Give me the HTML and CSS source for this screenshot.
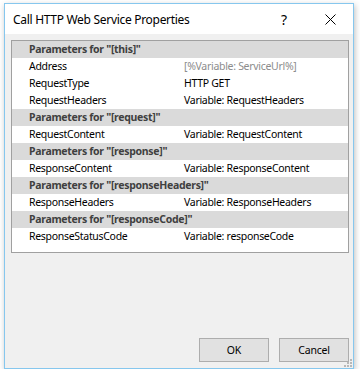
FILE: index.html
```html
<!DOCTYPE html>
<html>
<head>
    <title>Call HTTP Web Service Properties</title>
    <link rel="stylesheet" href="styles.css">
</head>
<body>
    <div class="dialog">
        <div class="title-bar">
            <span class="title">Call HTTP Web Service Properties</span>
            <span class="title-btn help">?</span>
            <span class="title-btn close">
                <svg width="11" height="11" viewBox="0 0 11 11">
                    <path d="M0.5 0.5 L10.5 10.5 M10.5 0.5 L0.5 10.5" stroke="#000" stroke-width="1" fill="none"/>
                </svg>
            </span>
        </div>

        <div class="client">
            <div class="prop-grid">
                <div class="group">Parameters for "[this]"</div>
                <div class="prop"><span class="name">Address</span><span class="value muted">[%Variable: ServiceUrl%]</span></div>
                <div class="prop"><span class="name">RequestType</span><span class="value">HTTP GET</span></div>
                <div class="prop"><span class="name">RequestHeaders</span><span class="value">Variable: RequestHeaders</span></div>
                <div class="group">Parameters for "[request]"</div>
                <div class="prop"><span class="name">RequestContent</span><span class="value">Variable: RequestContent</span></div>
                <div class="group">Parameters for "[response]"</div>
                <div class="prop"><span class="name">ResponseContent</span><span class="value">Variable: ResponseContent</span></div>
                <div class="group">Parameters for "[responseHeaders]"</div>
                <div class="prop"><span class="name">ResponseHeaders</span><span class="value">Variable: ResponseHeaders</span></div>
                <div class="group">Parameters for "[responseCode]"</div>
                <div class="prop"><span class="name">ResponseStatusCode</span><span class="value">Variable: responseCode</span></div>
            </div>

            <div class="button-row">
                <button class="button">OK</button>
                <button class="button">Cancel</button>
            </div>

            <svg class="grip" width="8" height="8" viewBox="0 0 8 8">
                <rect x="6" y="0" width="2" height="2" fill="#b8b8b8"/>
                <rect x="3" y="3" width="2" height="2" fill="#b8b8b8"/>
                <rect x="6" y="3" width="2" height="2" fill="#b8b8b8"/>
                <rect x="0" y="6" width="2" height="2" fill="#b8b8b8"/>
                <rect x="3" y="6" width="2" height="2" fill="#b8b8b8"/>
                <rect x="6" y="6" width="2" height="2" fill="#b8b8b8"/>
            </svg>
        </div>
    </div>
</body>
</html>
```

FILE: styles.css
```css
body {
    margin: 0;
    background: #fff;
    font-family: "Noto Sans", "Open Sans", sans-serif;
}
.dialog {
    box-sizing: border-box;
    width: 350px;
    height: 366px;
    margin: 3px 0 0 4px;
    border: 1px solid #86c7ee;
    display: flex;
    flex-direction: column;
    box-shadow: 1px 2px 6px rgba(0, 0, 0, 0.25);
}
.title-bar {
    height: 30px;
    background: #fff;
    display: flex;
    align-items: center;
}
.title {
    flex: 1;
    padding-left: 8px;
    font-size: 12px;
    letter-spacing: -0.3px;
    color: #000;
}
.title-btn {
    width: 46px;
    height: 30px;
    display: flex;
    align-items: center;
    justify-content: center;
    font-size: 14px;
    color: #000;
}
.client {
    position: relative;
    flex: 1;
    background: #f0f0f0;
    padding: 6px 4px 6px 6px;
    display: flex;
    flex-direction: column;
}
.prop-grid {
    width: 336px;
    height: 211px;
    border: 1px solid #a0a0a0;
    background: #fff;
    font-size: 10.5px;
    letter-spacing: -0.3px;
}
.group {
    height: 17px;
    line-height: 17px;
    background: #dadada;
    color: #404040;
    font-weight: bold;
    padding-left: 17px;
}
.prop {
    height: 17px;
    line-height: 17px;
    display: grid;
    grid-template-columns: 170px 1fr;
    color: #000;
}
.prop .name {
    padding-left: 17px;
}
.prop .value {
    padding-left: 2px;
}
.muted {
    color: #8c8c8c;
}
.button-row {
    margin-top: auto;
    display: flex;
    justify-content: flex-end;
    gap: 10px;
}
.button {
    width: 70px;
    height: 24px;
    background: #e1e1e1;
    border: 1px solid #adadad;
    font-family: "Noto Sans", "Open Sans", sans-serif;
    font-size: 10.5px;
    letter-spacing: -0.2px;
    color: #000;
    padding: 0;
}
.grip {
    position: absolute;
    right: 1px;
    bottom: 1px;
}
```
